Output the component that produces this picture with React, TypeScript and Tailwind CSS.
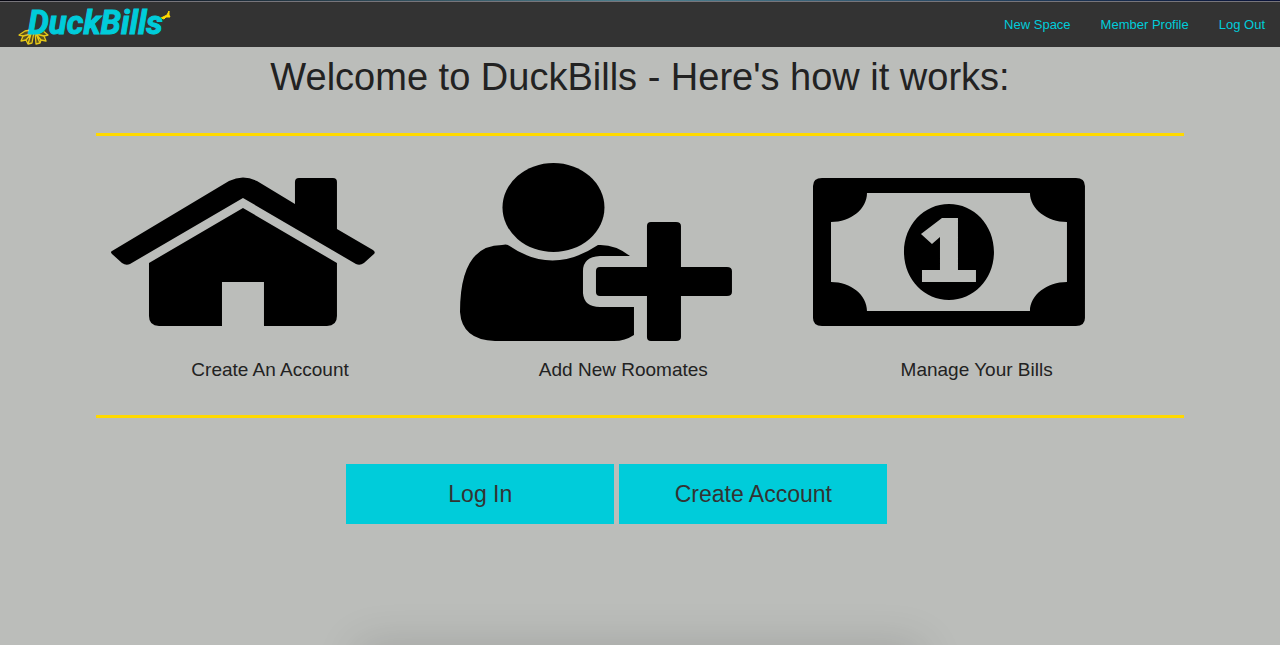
import type { ReactNode } from 'react';

const navLinks = ['New Space', 'Member Profile', 'Log Out'];

function Logo() {
  return (
    <a href="#home" aria-label="DuckBills" className="ml-4 block h-[45px] w-40">
      <svg viewBox="0 0 160 45" className="h-full w-full">
        <g fill="#5c5120" stroke="#e6c818" strokeWidth="1.3" strokeLinejoin="round">
          <path d="M15 28L9 29L3 33L7 34L5 39L10 38L12 42L16 41L18 30Z" />
          <path d="M19 30L20 42L24 41L25 38L30 39L28 34L32 33L26 28Z" />
          <path fill="none" d="M7 34L15 32L10 38M15 32L12 42M20 32L24 41M20 32L28 34M20 32L25 38" />
        </g>
        <path d="M145 16L151 13L153 9L153 13L154 15L150 15L148 17Z" fill="#ffd900" stroke="#ffd900" strokeWidth="1" />
        <text
          x="12"
          y="32"
          fill="#00ccda"
          stroke="#00ccda"
          strokeWidth="1"
          className="font-['Roboto','Liberation_Sans',sans-serif] text-[33px] font-bold italic"
        >
          DuckBills
        </text>
      </svg>
    </a>
  );
}

function HouseIcon() {
  return (
    <svg viewBox="0 0 272 180" className="block h-auto w-5/6" aria-hidden="true">
      <path d="M5 89L122 19Q136 12 150 19L188 42V20Q188 16 192 16H226Q230 16 230 20V67L266 88Q269 90 267 92L257 101Q253 104 249 102L136 36L23 102Q19 104 15 101L5 92Q3 90 5 89Z" />
      <path d="M136 46L230 101V154Q230 164 220 164H157V120H115V164H52Q42 164 42 154V101Z" />
    </svg>
  );
}

function AddUserIcon() {
  return (
    <svg viewBox="0 0 272 180" className="block h-auto w-5/6" aria-hidden="true">
      <ellipse cx="93.500" cy="45.500" rx="51" ry="44.500" />
      <path d="M48 83Q92 114 138 83Q155 82 170 94H140Q123 95 123 109V131Q124 145 140 145H174V173Q165 179 154 179H35Q2 178 0 150Q0 83 42 83Q46 82 48 83Z" />
      <path d="M191 60H216Q221 60 221 64V105H267Q272 105 272 109V130Q272 134 267 134H221V175Q221 179 216 179H191Q187 179 187 175V134H140Q136 134 136 130V109Q136 105 140 105H187V64Q187 60 191 60Z" />
    </svg>
  );
}

function BillIcon() {
  return (
    <svg viewBox="0 0 272 180" className="block h-auto w-5/6" aria-hidden="true">
      <path
        fillRule="evenodd"
        d="M9 16H263Q272 16 272 24V156Q272 164 263 164H9Q0 164 0 156V24Q0 16 9 16ZM54 31C54 47 38 60 18 60V120C38 120 54 133 54 149H217C217 133 234 120 254 120V60C234 60 217 47 217 31Z"
      />
      <path
        fillRule="evenodd"
        d="M136 42C161 42 181 63 181 90S161 138 136 138S91 117 91 90S111 42 136 42ZM129 56L108 72L119 82L127 75V108H109V120H163V108H145V56Z"
      />
    </svg>
  );
}

function Step({ label, children }: { label: string; children: ReactNode }) {
  return (
    <li className="w-[30.3%]">
      {children}
      <p className="mt-4 text-center text-[19px] leading-6">{label}</p>
    </li>
  );
}

export default function App() {
  return (
    <div className="relative flex min-h-screen flex-col overflow-hidden bg-[#bbbdba] font-['Liberation_Sans',Arial,sans-serif] text-[#222222]">
      <div className="h-px bg-linear-to-r from-[#05050f] via-[#4f8290] to-[#0a1238]" />
      <header className="flex items-center justify-between border-t border-[#77757b] bg-[#333333]">
        <Logo />
        <nav className="flex gap-[30px] pr-[15px] text-[13px] leading-5 text-[#00ccda]">
          {navLinks.map((label) => (
            <a key={label} href="#nav">
              {label}
            </a>
          ))}
        </nav>
      </header>

      <main className="mx-auto w-[85%]">
        <h1 className="pt-2 text-center text-[38px] leading-[44px]">Welcome to DuckBills - Here's how it works:</h1>
        <ul className="mt-[34px] flex gap-[2.5%] border-y-3 border-[#ffd900] pt-[26px] pb-[33px] pl-[1%]">
          <Step label="Create An Account">
            <HouseIcon />
          </Step>
          <Step label="Add New Roomates">
            <AddUserIcon />
          </Step>
          <Step label="Manage Your Bills">
            <BillIcon />
          </Step>
        </ul>
        <div className="mt-[46px] flex gap-[5px] pl-[23%] text-[23px] leading-7 text-[#333333]">
          <button type="button" className="h-[60px] w-[32%] bg-[#00ccda]">
            Log In
          </button>
          <button type="button" className="h-[60px] w-[32%] bg-[#00ccda]">
            Create Account
          </button>
        </div>
      </main>

      <div className="absolute top-full left-[28%] h-10 w-[44%] shadow-[0_0_45px_rgba(0,0,0,0.14)]" />
    </div>
  );
}
